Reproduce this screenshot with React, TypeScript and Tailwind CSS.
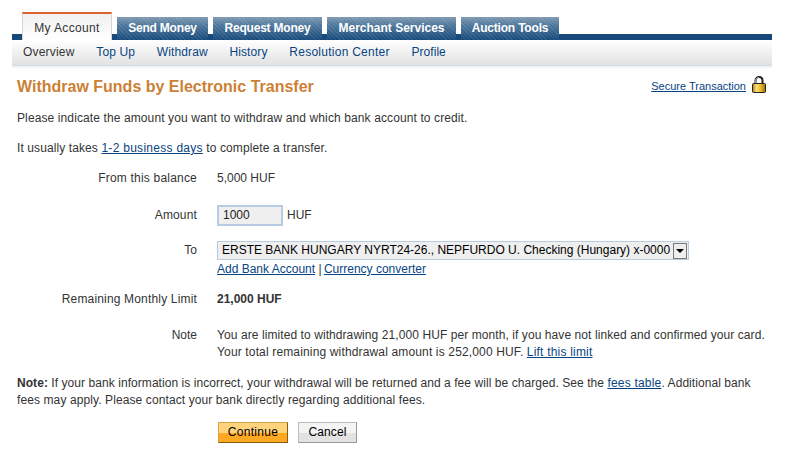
const tabs = [
  { label: "Send Money", width: "w-[91px]", tracking: "tracking-[-0.2px]" },
  { label: "Request Money", width: "w-[109px]", tracking: "tracking-[-0.2px]" },
  { label: "Merchant Services", width: "w-[129px]", tracking: "tracking-normal" },
  { label: "Auction Tools", width: "w-[98px]", tracking: "tracking-[-0.2px]" },
]

const subNav = [
  { label: "Top Up", tracking: "tracking-[0.12px]" },
  { label: "Withdraw", tracking: "tracking-[0.12px]" },
  { label: "History", tracking: "tracking-[0.12px]" },
  { label: "Resolution Center", tracking: "tracking-[0.26px]" },
  { label: "Profile", tracking: "tracking-[0.05px]" },
]

function Lock() {
  return (
    <svg width="14" height="17" viewBox="0 0 14 17" className="ml-[6px] -mt-[3px]">
      <defs>
        <linearGradient id="gold" x1="0" x2="1" y1="0" y2="0">
          <stop offset="0" stopColor="#a87a10" />
          <stop offset="0.3" stopColor="#fbe07a" />
          <stop offset="0.65" stopColor="#eab528" />
          <stop offset="1" stopColor="#9c7008" />
        </linearGradient>
      </defs>
      <path d="M3.5 8V4.5C3.5 2.2 5 1 7 1s3.5 1.2 3.5 3.5V8" fill="none" stroke="#222" strokeWidth="2" />
      <path d="M3.5 7.5V4.5C3.5 2.4 5 1.4 7 1.4" fill="none" stroke="#bbb" strokeWidth="0.8" />
      <rect x="0.5" y="7.5" width="13" height="9" rx="1" fill="url(#gold)" stroke="#222" />
    </svg>
  )
}

function Row({ label, className, labelClass, children }: { label: string; className?: string; labelClass?: string; children: React.ReactNode }) {
  return (
    <div className={`flex ${className ?? ""}`}>
      <div className={`w-[180px] text-right shrink-0 ${labelClass ?? ""}`}>{label}</div>
      <div className="ml-[20px] flex-1 whitespace-nowrap">{children}</div>
    </div>
  )
}

function A({ className, children }: { className?: string; children: React.ReactNode }) {
  return <a className={`text-[#084482] underline ${className ?? ""}`}>{children}</a>
}

export default function App() {
  return (
    <div className="w-[790px] h-[457px] bg-white overflow-hidden font-['Liberation_Sans',Arial,sans-serif] text-[12px] leading-[17px] text-[#333]">
      <div className="mx-3 w-[760px] pt-3">
        <div className="relative h-[28px] flex items-end bg-[linear-gradient(to_bottom,transparent_22px,#174a7a_22px)]">
          <div className="ml-[10px] w-[90px] h-[28px] border-t-2 border-t-[#e0602c] border-x border-x-[#d4d4d4] bg-[linear-gradient(to_bottom,#f0f0f0,#ffffff)] text-center text-[#333] tracking-[0.35px] leading-[28px]">
            My Account
          </div>
          <div className="flex gap-[5px] ml-[5px] h-[23px] self-start mt-[5px]">
            {tabs.map((t) => (
              <div
                key={t.label}
                className={`${t.width} ${t.tracking} h-[23px] bg-[repeating-linear-gradient(45deg,rgba(255,255,255,0.09)_0px,rgba(255,255,255,0.09)_1px,transparent_1px,transparent_3px),linear-gradient(to_bottom,#7f9ab3,#50789c_35%,#174a7a)] text-white font-bold text-center leading-[22px]`}
              >
                {t.label}
              </div>
            ))}
          </div>
        </div>
        <div className="h-[25px] flex items-center pl-[11px] gap-[21.7px] bg-[linear-gradient(to_bottom,#ffffff,#e2e2e2)] border-b border-b-[#cfdcea] box-content text-[#084482]">
          <span className="text-[#333] tracking-[0.2px]">Overview</span>
          {subNav.map((s) => (
            <span key={s.label} className={s.tracking}>
              {s.label}
            </span>
          ))}
        </div>
        <div className="h-[3px] bg-[linear-gradient(to_bottom,#e6edf5,#ffffff)]" />
      </div>

      <div className="mx-[17px] w-[749px]">
        <div className="flex items-center justify-between mt-[7px] h-[22px]">
          <h1 className="text-[#cc7f35] font-bold text-[16px] leading-[20px]">Withdraw Funds by Electronic Transfer</h1>
          <div className="flex items-center text-[11px] -mt-[2px]">
            <A>Secure Transaction</A>
            <Lock />
          </div>
        </div>

        <p className="mt-[12px] tracking-[0.11px]">Please indicate the amount you want to withdraw and which bank account to credit.</p>
        <p className="mt-[13px] tracking-[0.1px]">
          It usually takes <A className="tracking-[0.28px]">1-2 business days</A> to complete a transfer.
        </p>

        <Row label="From this balance" labelClass="tracking-[0.2px]" className="mt-[13px]">
          5,000 HUF
        </Row>
        <Row label="Amount" labelClass="tracking-[0.15px]" className="mt-[17px] items-center h-[22px]">
          <div className="flex items-center">
            <div className="w-[66px] h-[21px] border-2 border-[#b7cbe3] bg-[#efefef] pl-1 leading-[17px] text-[#222]">1000</div>
            <span className="ml-[4px]">HUF</span>
          </div>
        </Row>
        <Row label="To" labelClass="pt-px" className="mt-[15px]">
          <div className="w-[472px] h-[19px] border border-[#b7cbe3] bg-[#efefef] flex items-center justify-between pl-1 text-black leading-[17px]">
            <span>ERSTE BANK HUNGARY NYRT24-26., NEPFURDO U. Checking (Hungary) x-0000</span>
            <span className="w-[14px] h-[16px] mr-px border border-[#777] bg-[#eeeeee] flex items-center justify-center">
              <svg width="8" height="6" viewBox="0 0 8 6">
                <path d="M0 1h8L4 5z" fill="#000" />
              </svg>
            </span>
          </div>
          <div className="mt-[1px]">
            <A>Add Bank Account</A> | <A className="-ml-px">Currency converter</A>
          </div>
        </Row>
        <Row label="Remaining Monthly Limit" labelClass="tracking-[0.17px]" className="mt-[13px]">
          <b className="font-bold">21,000 HUF</b>
        </Row>
        <Row label="Note" className="mt-[19px]">
          <span className="tracking-[0.08px]">You are limited to withdrawing 21,000 HUF per month, if you have not linked and confirmed your card.</span>
          <br />
          <span className="tracking-[0.15px]">Your total remaining withdrawal amount is 252,000 HUF.</span> <A className="tracking-[0.2px]">Lift this limit</A>
        </Row>

        <p className="mt-[14px] whitespace-nowrap tracking-[0.06px]">
          <b>Note:</b> If your bank information is incorrect, your withdrawal will be returned and a fee will be charged. See the <A className="tracking-[0.2px]">fees table</A>. Additional bank
          <br />
          <span className="tracking-[0.1px]">fees may apply. Please contact your bank directly regarding additional fees.</span>
        </p>

        <div className="flex gap-[10px] ml-[201px] mt-[13px]">
          <button className="w-[70px] h-[21px] border border-[#d9a24a] border-b-[#8a5a10] border-r-[#8a5a10] bg-[linear-gradient(to_bottom,#ffd27c_50%,#ffa822_50%)] text-black leading-[17px] tracking-[0.3px]">
            Continue
          </button>
          <button className="w-[59px] h-[21px] border border-[#bbb] border-b-[#999] border-r-[#999] bg-[linear-gradient(to_bottom,#f4f4f4_50%,#e2e2e2_50%)] text-black leading-[17px] tracking-[0.1px]">
            Cancel
          </button>
        </div>
      </div>
    </div>
  )
}
